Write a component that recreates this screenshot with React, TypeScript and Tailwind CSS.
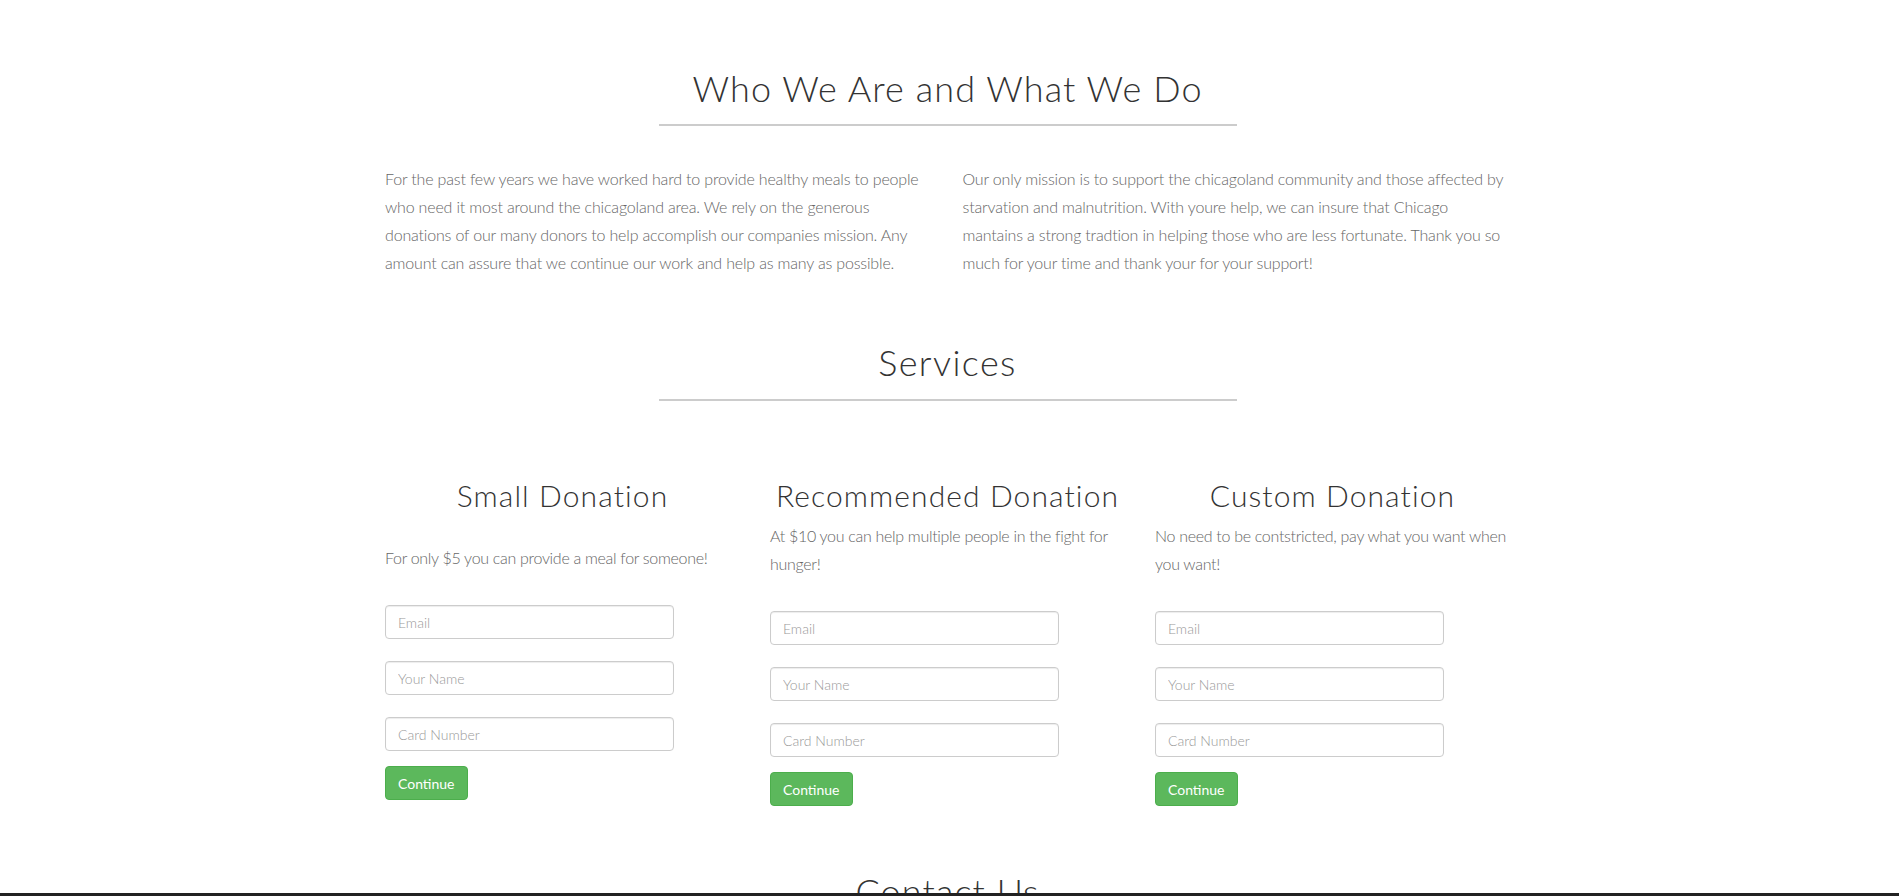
import React from "react";

const Field = ({ placeholder, last }: { placeholder: string; last?: boolean }) => (
  <input
    type="text"
    placeholder={placeholder}
    className={`block h-[34px] w-[289px] rounded-[4px] border border-[#ccc] bg-white px-[12px] text-[14px] font-light text-[#555] shadow-[inset_0_1px_1px_rgba(0,0,0,0.075)] outline-none placeholder:text-[#999] ${
      last ? "mb-[15px]" : "mb-[22px]"
    }`}
  />
);

const DonationCol = ({
  title,
  text,
  textClass,
}: {
  title: string;
  text: string;
  textClass: string;
}) => (
  <div className="w-1/3 px-[15px]">
    <h3 className="text-center text-[30px] font-light leading-[33px] tracking-[1.1px] text-[#333]">{title}</h3>
    <p className={`${textClass} text-[16px] font-light leading-[28px] tracking-[-0.3px] text-[#666]`}>{text}</p>
    <form className="mt-[33px]" onSubmit={(e) => e.preventDefault()}>
      <Field placeholder="Email" />
      <Field placeholder="Your Name" />
      <Field placeholder="Card Number" last />
      <button
        type="submit"
        className="h-[34px] rounded-[4px] border border-[#4cae4c] bg-[#5cb85c] px-[12px] text-[14px] font-normal text-white"
      >
        Continue
      </button>
    </form>
  </div>
);

export default function App() {
  return (
    <div className="min-h-screen bg-white pb-[80px] pr-[4px] font-['Lato',sans-serif]">
      <section className="pt-[68px]">
        <h1 className="text-center text-[36px] font-light leading-[40px] tracking-[1.1px] text-[#333]">
          Who We Are and What We Do
        </h1>
        <div className="mx-auto mt-[16px] h-[2px] w-[578px] bg-[#ccc]" />
        <div className="mx-auto mt-[39px] flex w-[1155px]">
          <div className="w-1/2 px-[15px]">
            <p className="text-[16px] font-light leading-[28px] tracking-[-0.17px] text-[#666]">
              For the past few years we have worked hard to provide healthy meals to people who need it most around the
              chicagoland area. We rely on the generous donations of our many donors to help accomplish our companies
              mission. Any amount can assure that we continue our work and help as many as possible.
            </p>
          </div>
          <div className="w-1/2 px-[15px]">
            <p className="text-[16px] font-light leading-[28px] tracking-[-0.17px] text-[#666]">
              Our only mission is to support the chicagoland community and those affected by starvation and malnutrition.
              With youre help, we can insure that Chicago mantains a strong tradtion in helping those who are less
              fortunate. Thank you so much for your time and thank your for your support!
            </p>
          </div>
        </div>
      </section>

      <section className="mt-[65px]">
        <h2 className="text-center text-[36px] font-light leading-[40px] tracking-[1.4px] text-[#333]">Services</h2>
        <div className="mx-auto mt-[17px] h-[2px] w-[578px] bg-[#ccc]" />
        <div className="mx-auto mt-[78px] flex w-[1155px]">
          <DonationCol
            title="Small Donation"
            text="For only $5 you can provide a meal for someone!"
            textClass="mt-[32px]"
          />
          <DonationCol
            title="Recommended Donation"
            text="At $10 you can help multiple people in the fight for hunger!"
            textClass="mt-[10px]"
          />
          <DonationCol
            title="Custom Donation"
            text="No need to be contstricted, pay what you want when you want!"
            textClass="mt-[10px]"
          />
        </div>
      </section>

      <section className="mt-[65px]">
        <h2 className="text-center text-[36px] font-light leading-[40px] tracking-[1.1px] text-[#333]">Contact Us</h2>
      </section>

      <div className="fixed bottom-0 left-0 h-[3px] w-full bg-[#222]" />
    </div>
  );
}
